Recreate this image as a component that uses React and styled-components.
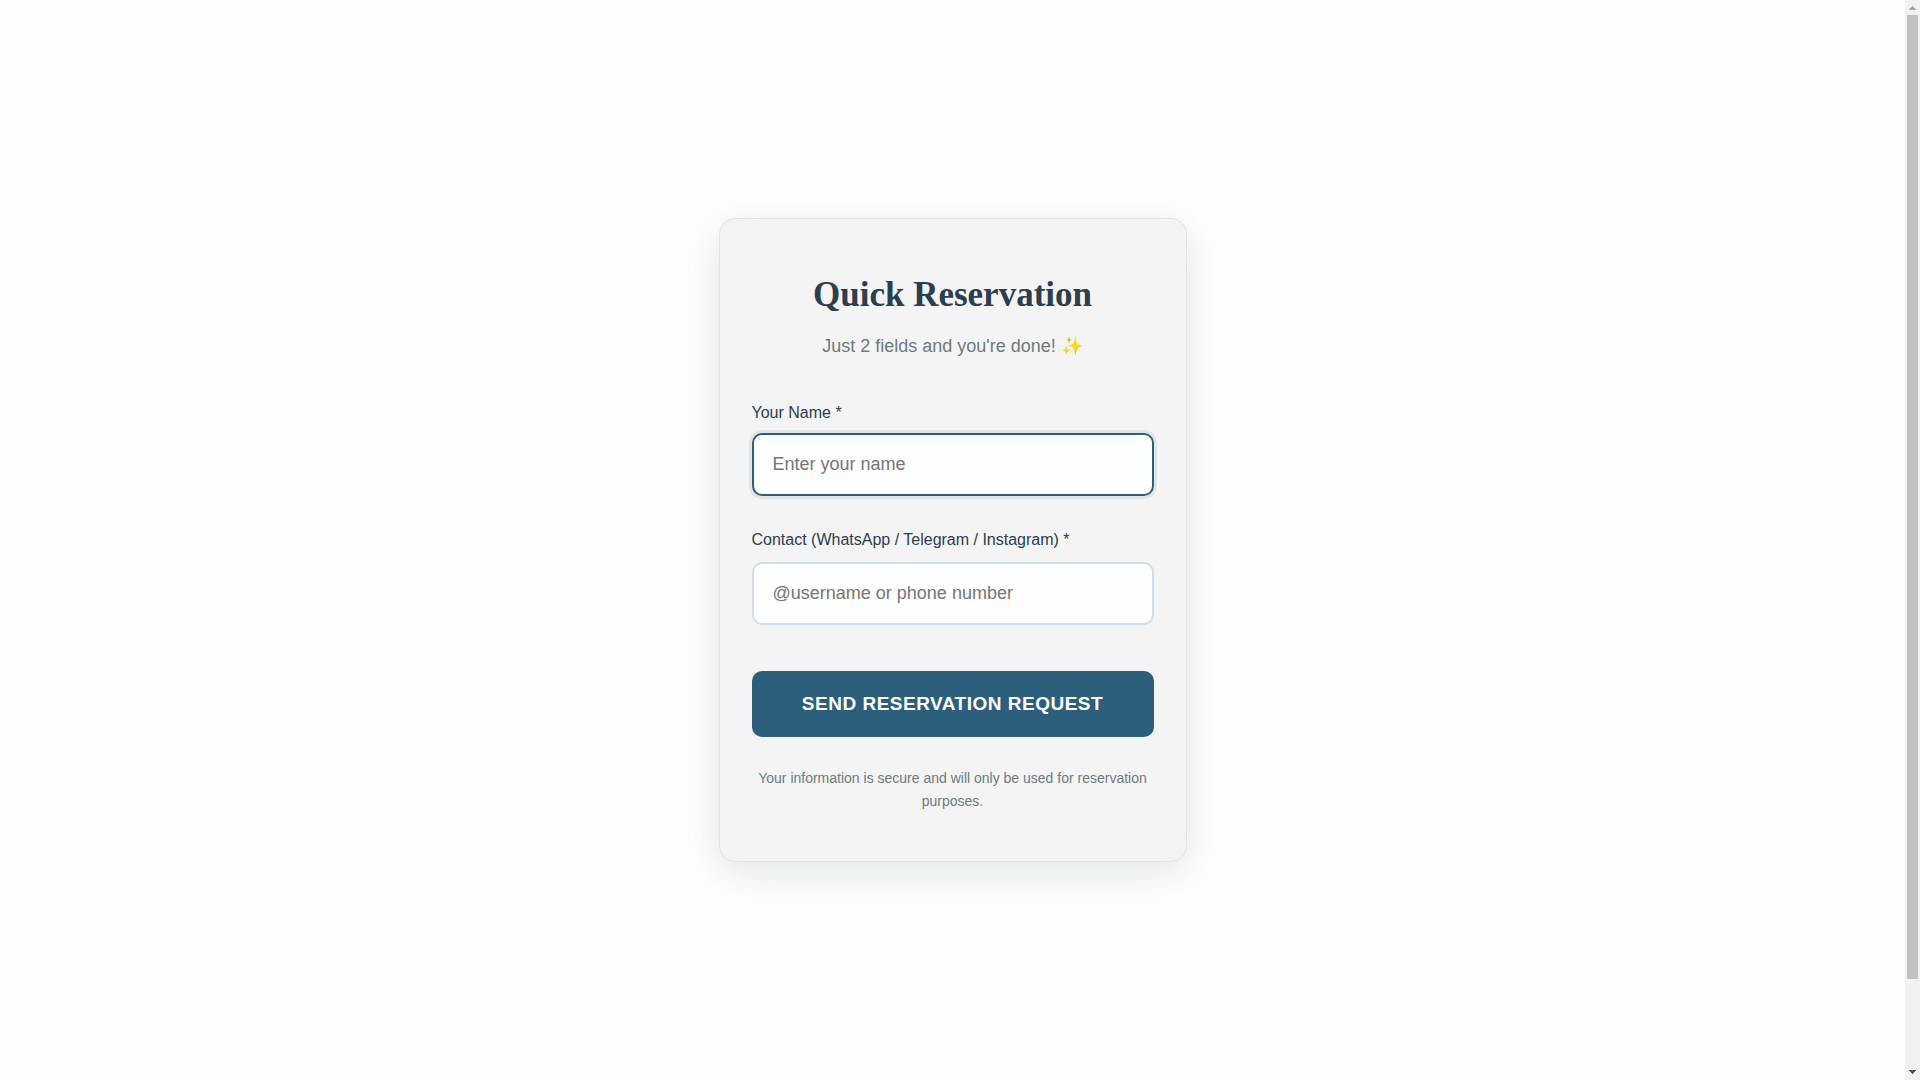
import React, {useState} from 'react'
import styled, {createGlobalStyle} from 'styled-components'

const GlobalStyle = createGlobalStyle`
  * {
    box-sizing: border-box;
  }
  body {
    margin: 0;
    background-color: #fefefe;
    color: #2c3e50;
    font-family: "Liberation Sans", Arial, sans-serif;
    font-size: 16px;
    line-height: 26px;
  }
`

const StyledPage = styled.div`
  display: flex;
  height: 100vh;
  overflow: hidden;
`
const StyledMain = styled.main`
  display: flex;
  flex: 1;
  justify-content: center;
  align-items: center;
  padding: 24px;
`
const StyledCard = styled.form`
  width: 100%;
  max-width: 468px;
  padding: 48px 32px;
  border: 1px solid #dde4e9;
  border-radius: 16px;
  background-color: #f4f4f4;
  box-shadow: 0 10px 40px rgba(44, 95, 124, 0.15);
  text-align: center;
`
const StyledTitle = styled.h1`
  margin: 0 0 8px;
  font-family: "Liberation Serif", "Times New Roman", serif;
  font-size: 35px;
  font-weight: 700;
  line-height: 56px;
`
const StyledSubtitle = styled.p`
  margin: 0 0 39px;
  color: #6c7b7f;
  font-size: 18px;
  line-height: 30px;
`
const StyledField = styled.div`
  display: flex;
  flex-direction: column;
  gap: 9px;
  margin-bottom: 29px;
  text-align: left;
`
const StyledInput = styled.input`
  width: 100%;
  height: 63px;
  padding: 0 19px;
  border: 2px solid #d1dde6;
  border-radius: 10px;
  outline: none;
  background-color: #fefefe;
  color: #2c3e50;
  font-family: inherit;
  font-size: 18px;

  &:focus {
    border-color: #2c5f7c;
    box-shadow: 0 0 0 3px rgba(44, 95, 124, 0.1);
    transform: translateY(-2px);
  }
`
const StyledSubmitButton = styled.button`
  width: 100%;
  height: 66px;
  margin-top: 17px;
  border: none;
  border-radius: 10px;
  background-color: #2c5f7c;
  color: #fefefe;
  font-family: inherit;
  font-size: 19px;
  font-weight: 600;
  letter-spacing: 0.5px;
  text-transform: uppercase;
  cursor: pointer;
`
const StyledNote = styled.p`
  margin: 30px 0 0;
  color: #6c7b7f;
  font-size: 14px;
  line-height: 23px;
`

const StyledScrollbar = styled.div`
  display: flex;
  flex-direction: column;
  align-items: center;
  width: 15px;
  background-color: #f1f1f1;
`
const StyledArrow = styled.svg`
  display: block;
  width: 15px;
  height: 15px;
  fill: ${props => props.$color};
`
const StyledTrack = styled.div`
  flex: 1;
  width: 11px;
`
const StyledThumb = styled.div`
  height: 91.8%;
  background-color: #c1c1c1;
`

const fields = [
  {
    name: 'name',
    label: 'Your Name *',
    placeholder: 'Enter your name'
  },
  {
    name: 'contact',
    label: 'Contact (WhatsApp / Telegram / Instagram) *',
    placeholder: '@username or phone number'
  }
]

const Scrollbar = () => (
  <StyledScrollbar aria-hidden="true">
    <StyledArrow $color="#a3a3a3" viewBox="0 0 15 15" shapeRendering="crispEdges">
      <path d="M7 6h1v1h1v1h1v1h1v1H4V9h1V8h1V7h1z" />
    </StyledArrow>
    <StyledTrack>
      <StyledThumb />
    </StyledTrack>
    <StyledArrow $color="#505050" viewBox="0 0 15 15" shapeRendering="crispEdges">
      <path d="M4 5h7v1h-1v1H9v1H8v1H7V8H6V7H5V6H4z" />
    </StyledArrow>
  </StyledScrollbar>
)

export default function App () {
  const [values, setValues] = useState({name: '', contact: ''})

  const handleChange = (e) => {
    setValues({...values, [e.target.name]: e.target.value})
  }

  return (
    <StyledPage>
      <GlobalStyle />
      <StyledMain>
        <StyledCard onSubmit={e => e.preventDefault()}>
          <StyledTitle>Quick Reservation</StyledTitle>
          <StyledSubtitle>Just 2 fields and you're done! ✨</StyledSubtitle>
          {
            fields.map((field, index) => (
              <StyledField key={field.name}>
                <label htmlFor={field.name}>{field.label}</label>
                <StyledInput
                  id={field.name}
                  name={field.name}
                  type="text"
                  placeholder={field.placeholder}
                  value={values[field.name]}
                  onChange={handleChange}
                  autoFocus={index === 0}
                />
              </StyledField>
            ))
          }
          <StyledSubmitButton type="submit">Send Reservation Request</StyledSubmitButton>
          <StyledNote>
            Your information is secure and will only be used for reservation purposes.
          </StyledNote>
        </StyledCard>
      </StyledMain>
      <Scrollbar />
    </StyledPage>
  )
}
